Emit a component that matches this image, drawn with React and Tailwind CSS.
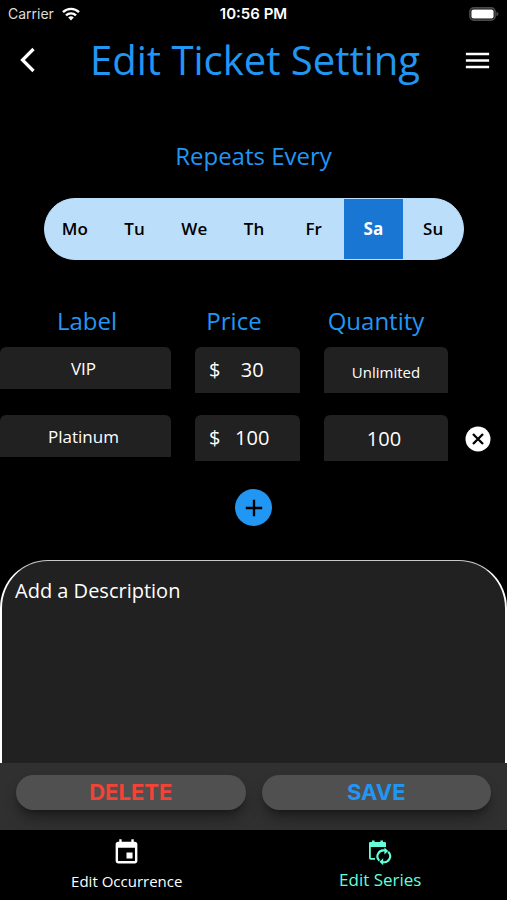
import { useState } from "react";
import { MdAdd, MdEvent, MdMenu } from "react-icons/md";

const days = ["Mo", "Tu", "We", "Th", "Fr", "Sa", "Su"];

const initialTickets = [
  { id: 1, label: "VIP", price: "30", quantity: "Unlimited", removable: false },
  { id: 2, label: "Platinum", price: "100", quantity: "100", removable: true },
];

function StatusBar() {
  return (
    <div className="grid h-7 grid-cols-3 items-center pl-2 pr-2 font-['Inter',sans-serif] text-sm text-white">
      <div className="flex items-center gap-2 text-[#dddddd]">
        Carrier
        <svg width="18" height="14" viewBox="0 0 18 14" fill="none" stroke="#fff" strokeWidth="2.4" aria-hidden="true">
          <path d="M1 5.2a11.4 11.4 0 0 1 16 0" />
          <path d="M4 8.4a7.2 7.2 0 0 1 10 0" />
          <path d="M6.2 10.6a4 4 0 0 1 5.6 0L9 13.6z" fill="#fff" stroke="none" />
        </svg>
      </div>
      <div className="text-center text-[15px] font-semibold">10:56 PM</div>
      <div className="flex justify-end">
        <svg width="30" height="14" viewBox="0 0 30 14" aria-hidden="true">
          <rect x="0.9" y="0.9" width="25.2" height="12.2" rx="3.8" fill="none" stroke="#4a4a4a" strokeWidth="1.6" />
          <rect x="2.4" y="2.4" width="22.2" height="9.2" rx="2" fill="#fff" />
          <path d="M27.4 4.8c1.6.6 2 1.4 2 2.2s-.4 1.6-2 2.2z" fill="#4a4a4a" />
        </svg>
      </div>
    </div>
  );
}

function Header() {
  return (
    <header className="flex h-16 items-center justify-between px-4">
      <button type="button" aria-label="Back" className="flex w-8 text-white">
        <svg width="24" height="26" viewBox="0 0 24 26" fill="none" stroke="currentColor" strokeWidth="3.2">
          <path d="M17.5 2 6.5 13l11 11" />
        </svg>
      </button>
      <h1 className="whitespace-nowrap text-[40px] leading-none text-[#2196f3]">Edit Ticket Setting</h1>
      <button type="button" aria-label="Menu" className="-mr-0.5 text-white">
        <MdMenu size={31} />
      </button>
    </header>
  );
}

function DayPicker({ selected, onSelect }) {
  return (
    <div className="ml-11 mr-[43px] mt-[26px] grid h-[62px] grid-cols-7 overflow-hidden rounded-full border border-[#bbdefb] bg-[#bbdefb]">
      {days.map((day) => (
        <button
          key={day}
          type="button"
          aria-pressed={day === selected}
          onClick={() => onSelect(day)}
          className={`text-[17px] ${
            day === selected ? "bg-[#1976d2] font-bold text-white" : "font-semibold text-black"
          }`}
        >
          {day}
        </button>
      ))}
    </div>
  );
}

function TicketRow({ ticket, onChange, onRemove }) {
  return (
    <div className="flex items-start">
      <div className="grid flex-1 grid-cols-[171fr_105fr_124fr] items-start gap-6">
        <input
          aria-label="Label"
          value={ticket.label}
          onChange={(e) => onChange("label", e.target.value)}
          className="h-[42px] w-full min-w-0 rounded-t-md bg-[#212121] pr-1 text-center text-[17px] text-white"
        />
        <div className="flex h-[46px] min-w-0 items-center rounded-t-md bg-[#212121] pl-[14px] text-xl text-white">
          <span>$</span>
          <input
            aria-label="Price"
            value={ticket.price}
            onChange={(e) => onChange("price", e.target.value)}
            className="w-full min-w-0 bg-transparent pr-4 text-center"
          />
        </div>
        <input
          aria-label="Quantity"
          value={ticket.quantity}
          onChange={(e) => onChange("quantity", e.target.value)}
          className={`h-[46px] w-full min-w-0 rounded-t-md bg-[#212121] text-center text-white ${
            ticket.quantity === "Unlimited" ? "pt-1 text-[15px]" : "pr-1 text-xl"
          }`}
        />
      </div>
      <div className="flex h-12 w-[59px] items-center justify-center">
        {ticket.removable && (
          <button type="button" aria-label={`Remove ${ticket.label}`} onClick={onRemove}>
            <svg width="26" height="26" viewBox="0 0 26 26">
              <circle cx="13" cy="13" r="12.5" fill="#fff" />
              <path d="m8 8 10 10M18 8 8 18" stroke="#000" strokeWidth="2.3" />
            </svg>
          </button>
        )}
      </div>
    </div>
  );
}

function SeriesIcon() {
  return (
    <svg width="24" height="26" viewBox="0 0 24 26" fill="none" stroke="currentColor" aria-hidden="true">
      <path d="M1 3.2Q1 2 2.2 2H4V.6h2.6V2h5.8V.6H15V2h1.8Q18 2 18 3.2V7H1z" fill="currentColor" stroke="none" />
      <path d="M1.9 6v12q0 .9.9.9H7" strokeWidth="1.8" />
      <path d="M17 10.6a6 6 0 0 0-5.6 10.2M14.6 22a6 6 0 0 0 5.6-10.2" strokeWidth="2.1" />
      <path d="M16.4 7.6 20.2 11l-3.8 3.4zM15.2 18.2l-3.8 3.6 3.8 3.4z" fill="currentColor" stroke="none" />
    </svg>
  );
}

export default function App() {
  const [day, setDay] = useState("Sa");
  const [tickets, setTickets] = useState(initialTickets);
  const [description, setDescription] = useState("");

  const updateTicket = (id, key, value) => {
    setTickets(tickets.map((t) => (t.id === id ? { ...t, [key]: value } : t)));
  };

  const addTicket = () => {
    setTickets([...tickets, { id: Date.now(), label: "", price: "", quantity: "", removable: true }]);
  };

  return (
    <div className="flex min-h-screen flex-col bg-black font-['Open_Sans',sans-serif]">
      <StatusBar />
      <Header />

      <main className="flex flex-1 flex-col">
        <h2 className="mt-12 text-center text-2xl text-[#2196f3]">Repeats Every</h2>
        <DayPicker selected={day} onSelect={setDay} />

        <div className="mt-[45px] grid grid-cols-[174fr_120fr_164fr_49fr] text-center text-2xl text-[#2196f3]">
          <span>Label</span>
          <span>Price</span>
          <span>Quantity</span>
        </div>
        <div className="mt-[10px] flex flex-col gap-5">
          {tickets.map((ticket) => (
            <TicketRow
              key={ticket.id}
              ticket={ticket}
              onChange={(key, value) => updateTicket(ticket.id, key, value)}
              onRemove={() => setTickets(tickets.filter((t) => t.id !== ticket.id))}
            />
          ))}
        </div>

        <button
          type="button"
          aria-label="Add ticket"
          onClick={addTicket}
          className="mx-auto mt-[26px] flex size-[37px] items-center justify-center rounded-full bg-[#2196f3] text-black"
        >
          <MdAdd size={28} />
        </button>

        <textarea
          aria-label="Description"
          placeholder="Add a Description"
          value={description}
          onChange={(e) => setDescription(e.target.value)}
          className="mt-[34px] w-full flex-1 resize-none rounded-t-[48px] border-x-2 border-t border-x-white border-t-[#c8c8c8] bg-[#212121] px-[13px] pt-4 text-xl text-white placeholder:text-white"
        />
      </main>

      {/* actions */}
      <div className="grid h-[67px] grid-cols-2 items-start gap-4 bg-[#303030] px-4 pt-3 font-['Inter',sans-serif] text-[22px] font-bold">
        <button type="button" className="h-[35px] rounded-full bg-[#505050] text-[#f44336] shadow-lg shadow-black/40">
          DELETE
        </button>
        <button type="button" className="h-[35px] rounded-full bg-[#505050] text-[#2196f3] shadow-lg shadow-black/40">
          SAVE
        </button>
      </div>

      {/* bottom tabs */}
      <nav className="grid h-[70px] grid-cols-2 bg-black">
        <a href="#occurrence" className="flex flex-col items-center pt-2 text-[15px] text-white">
          <MdEvent size={29} />
          <span className="mt-1 leading-5">Edit Occurrence</span>
        </a>
        <a href="#series" className="flex flex-col items-center pt-[10px] text-[17px] text-[#64ffda]">
          <SeriesIcon />
          <span className="mt-1 leading-5">Edit Series</span>
        </a>
      </nav>
    </div>
  );
}
